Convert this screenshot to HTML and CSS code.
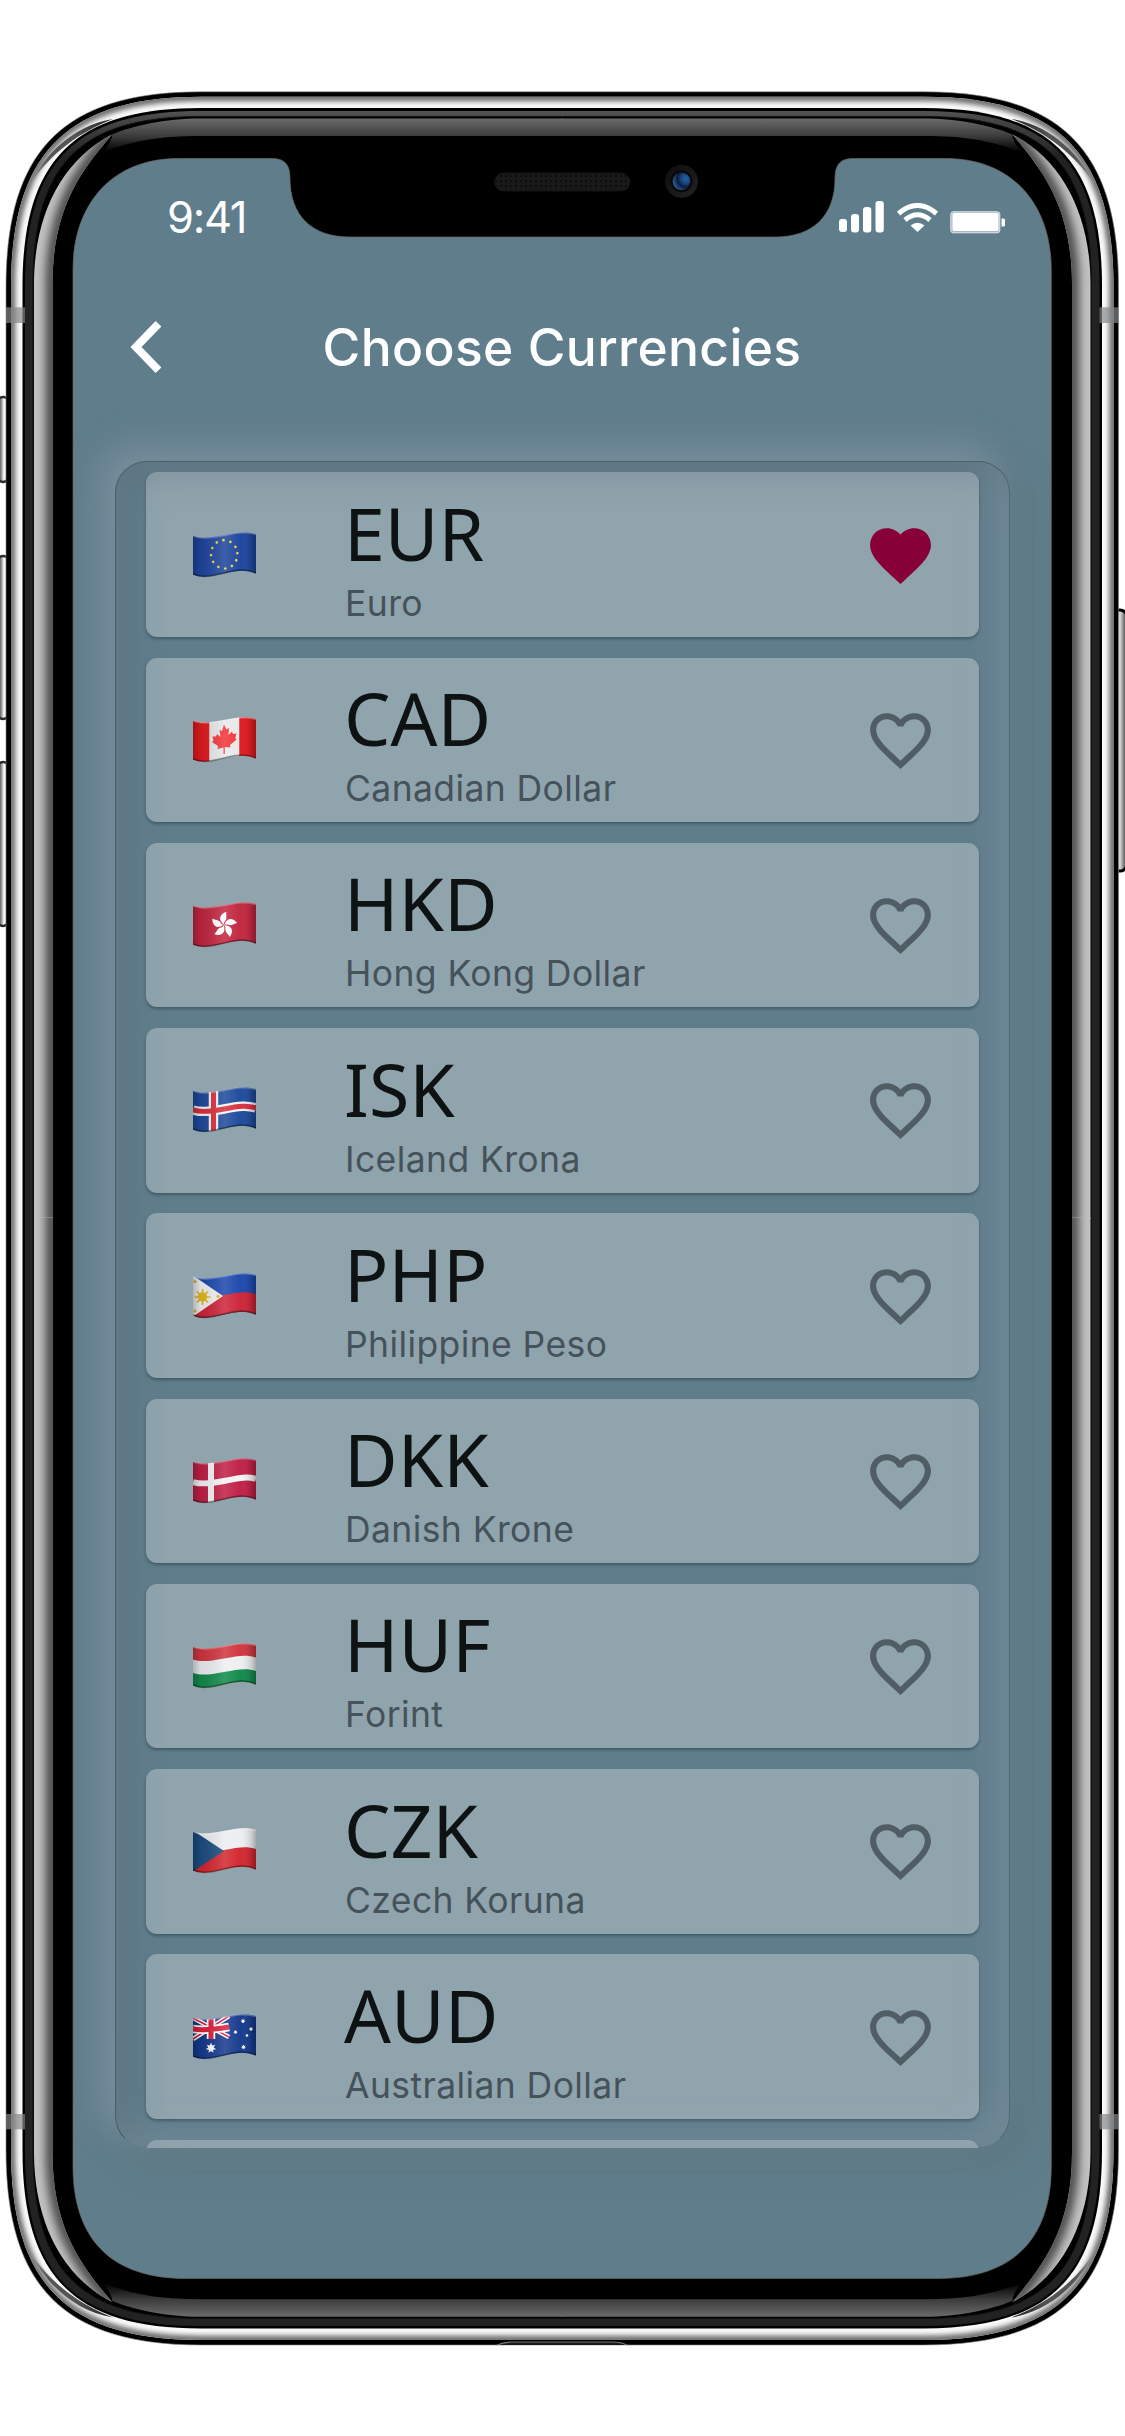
FILE: index.html
```html
<!DOCTYPE html>
<html lang="en">
<head>
<meta charset="utf-8">
<title>Choose Currencies</title>
<link rel="stylesheet" href="styles.css">
</head>
<body>
<div class="phone">
  <svg class="frame" viewBox="0 0 1125 2436" aria-hidden="true">
    <defs>
      <linearGradient id="btn" x1="0" x2="1" y1="0" y2="0"><stop offset="0" stop-color="#222"/><stop offset=".3" stop-color="#777"/><stop offset=".42" stop-color="#aaa"/><stop offset=".58" stop-color="#fff"/><stop offset=".75" stop-color="#ddd"/><stop offset="1" stop-color="#888"/></linearGradient>
      <linearGradient id="btnR" x1="0" x2="1" y1="0" y2="0"><stop offset="0" stop-color="#999"/><stop offset=".3" stop-color="#ddd"/><stop offset=".55" stop-color="#d4d4d4"/><stop offset=".8" stop-color="#777"/><stop offset="1" stop-color="#333"/></linearGradient>
      <linearGradient id="topEdge" gradientUnits="userSpaceOnUse" x1="0" x2="0" y1="108" y2="170"><stop offset="0" stop-color="#5a5a5a"/><stop offset=".15" stop-color="#484848"/><stop offset=".8" stop-color="#222"/></linearGradient>
      <linearGradient id="strip" gradientUnits="userSpaceOnUse" x1="0" x2="0" y1="118" y2="152"><stop offset="0" stop-color="#6c6c6c"/><stop offset=".53" stop-color="#3c3c3c"/><stop offset="1" stop-color="#000"/></linearGradient>
      <linearGradient id="streak" gradientUnits="userSpaceOnUse" x1="30" x2="115" y1="185" y2="115"><stop offset="0" stop-color="#999"/><stop offset=".3" stop-color="#555"/><stop offset=".6" stop-color="#555"/><stop offset="1" stop-color="#222"/></linearGradient>
      <radialGradient id="lens" cx=".75" cy=".35" r=".8"><stop offset="0" stop-color="#245f9f"/><stop offset=".35" stop-color="#1a4580"/><stop offset=".6" stop-color="#0c1c3c"/><stop offset="1" stop-color="#2d66a8"/></radialGradient>
      <linearGradient id="lensRing" x1="0" y1="0" x2="1" y2="1"><stop offset="0" stop-color="#0c0c0c"/><stop offset="1" stop-color="#242424"/></linearGradient>
      <pattern id="mesh" width="5" height="5" patternUnits="userSpaceOnUse"><rect width="5" height="5" fill="#191919"/><rect width="2" height="2" fill="#0b0b0b"/></pattern>
      <filter id="soft" x="-10%" y="-10%" width="120%" height="120%"><feGaussianBlur stdDeviation="2.8"/></filter>
      <filter id="soft2" x="-50%" y="-5%" width="200%" height="110%"><feGaussianBlur stdDeviation="5"/></filter>
      <path id="steel" d="M201,96.8H923.5C1057.5,96.8 1113.5,152.8 1113.5,286.8V2150C1113.5,2284 1057.5,2340 923.5,2340H201C67,2340 11,2284 11,2150V286.8C11,152.8 67,96.8 201,96.8Z"/>
      <clipPath id="steelClip"><use href="#steel"/></clipPath>
      <path id="glass" d="M34,1219V284C34,215 62,160 112,134.500C84,168 52.500,205 52.500,284V1219Z"/>
      <clipPath id="glassClip"><use href="#glass"/></clipPath>
      <g id="corner">
        <path d="M30,184C45,155 72,126 113,119C80,132 52,152 30,184Z" fill="url(#streak)"/>
        <use href="#glass" fill="#c2c2c2"/>
        <g clip-path="url(#glassClip)"><path d="M112,134.500C84,168 52.500,205 52.500,284V1330" fill="none" stroke="#484848" stroke-width="14" filter="url(#soft2)"/></g>
      </g>
      <path id="stripShape" d="M563,118.500H201C165,118.500 132,126 112,134.500C112,142 106,148 102,153C130,141 160,136 201,136H563Z"/>
    </defs>
    <g stroke="#2a2a2a" stroke-width="2.500" fill="url(#btn)">
      <rect x="-3" y="397" width="12" height="85" rx="6"/><rect x="-3" y="556" width="12" height="163" rx="6"/><rect x="-3" y="762" width="12" height="164" rx="6"/>
    </g>
    <rect x="1112" y="610" width="15" height="261" rx="7" stroke="#000" stroke-width="3" fill="url(#btnR)"/>
    <path d="M201,91.800H923.500C1060.500,91.800 1118.500,149.800 1118.500,286.800V2150C1118.500,2287 1060.500,2345 923.500,2345H201C64,2345 6,2287 6,2150V286.800C6,149.800 64,91.800 201,91.800Z" stroke="#888" stroke-width=".6"/>
    <use href="#steel" fill="#fafafa"/>
    <g clip-path="url(#steelClip)"><use href="#steel" fill="none" stroke="#707070" stroke-width="9" filter="url(#soft)"/></g>
    <path d="M200.500,108H924C1050,108 1102,160 1102,286V2150.500C1102,2276.500 1050,2328.500 924,2328.500H200.500C74.500,2328.500 22.500,2276.500 22.500,2150.500V286C22.500,160 74.500,108 200.500,108Z"/>
    <path d="M201,111H923.500C1049.500,111 1099.500,161 1099.500,287V2150C1099.500,2276 1049.500,2326 923.500,2326H201C75,2326 25,2276 25,2150V287C25,161 75,111 201,111Z" fill="url(#topEdge)"/>
    <path d="M201,116.500H923.500C1044.500,116.500 1091.500,163.500 1091.500,284.500V2150.500C1091.500,2271.500 1044.500,2318.500 923.500,2318.500H201C80,2318.500 33,2271.500 33,2150.500V284.500C33,163.500 80,116.500 201,116.500Z" fill="#000" stroke="#111" stroke-width="1"/>
    <use href="#corner"/>
    <use href="#corner" transform="translate(1124.500 0) scale(-1 1)"/>
    <use href="#corner" transform="translate(0 2436.500) scale(1 -1)"/>
    <use href="#corner" transform="translate(1124.500 2436.500) scale(-1 -1)"/>
    <g fill="url(#strip)">
      <use href="#stripShape"/>
      <use href="#stripShape" transform="translate(1124.500 0) scale(-1 1)"/>
      <use href="#stripShape" transform="translate(0 2435.300) scale(1 -1)"/>
      <use href="#stripShape" transform="translate(1124.500 2435.300) scale(-1 -1)"/>
    </g>
    <g fill="#868789" opacity=".69"><rect x="6" y="307.300" width="19" height="15.700"/><rect x="1099.500" y="307.300" width="19" height="15.700"/><rect x="6" y="2114" width="19" height="15.300"/><rect x="1099.500" y="2114" width="19" height="15.300"/></g>
    <path d="M178,158.500H272C284,158.500 290,164 290,178C290,216 312,237 350,237H775C813,237 835,216 835,178C835,164 841,158.500 853,158.500H946C1012,158.500 1051.300,204 1051.300,270V2166C1051.300,2240 1012,2278.500 938,2278.500H186C112,2278.500 73,2240 73,2166V270C73,204 112,158.500 178,158.500Z" fill="#607d8b" stroke="#6b6560" stroke-width=".7"/>
    <rect x="494.500" y="173" width="135.500" height="18" rx="9" fill="url(#mesh)" stroke="#141414"/>
    <circle cx="681.500" cy="181.300" r="16.500" fill="url(#lensRing)"/><circle cx="681.500" cy="181.300" r="11" fill="#080808"/><circle cx="681.500" cy="181.300" r="8.800" fill="url(#lens)"/>
    <path d="M497,2345C502,2342.500 506,2342 512,2342H612C618,2342 622,2342.500 627,2345" fill="#1a1a1a" stroke="#777" stroke-width="1.200"/>
  </svg>

  <svg class="defs" aria-hidden="true">
    <defs>
      <linearGradient id="sheen" x1="0" x2="1" y1="0" y2="0"><stop offset="0" stop-color="#000" stop-opacity=".25"/><stop offset=".12" stop-color="#000" stop-opacity=".08"/><stop offset=".5" stop-color="#fff" stop-opacity=".14"/><stop offset=".75" stop-color="#fff" stop-opacity=".02"/><stop offset=".93" stop-color="#000" stop-opacity=".14"/><stop offset="1" stop-color="#000" stop-opacity=".3"/></linearGradient>
      <path id="wave" d="M0,3.500C8,6.500 16,6 31,3S54,-1 63,2V41.500C54,37.500 46,38 31,41.500S8,46 0,42.500Z"/>
      <clipPath id="waveClip"><use href="#wave"/></clipPath>
      <g id="gloss"><use href="#wave" fill="url(#sheen)"/><path d="M0,42C8,45.500 16,45 31,41S54,37 63,41" fill="none" stroke="#000" stroke-opacity=".4" stroke-width="1.600"/><path d="M0,4C8,7 16,6.500 31,3.500S54,-.5 63,2.500" fill="none" stroke="#fff" stroke-opacity=".25" stroke-width="1.500"/></g>
      <path id="heart" d="M16.500 3c-1.740 0-3.410.810-4.500 2.090C10.910 3.810 9.240 3 7.500 3 4.420 3 2 5.420 2 8.500c0 3.780 3.400 6.860 8.550 11.540L12 21.350l1.450-1.320C18.600 15.360 22 12.280 22 8.500 22 5.420 19.580 3 16.500 3zm-4.400 15.550l-.1.100-.1-.1C7.140 14.240 4 11.390 4 8.500 4 6.500 5.500 5 7.500 5c1.540 0 3.040.990 3.570 2.360h1.870C13.460 5.990 14.960 5 16.500 5c2 0 3.500 1.500 3.500 3.500 0 2.890-3.140 5.740-7.900 10.050z"/>
      <path id="star" d="M0,-3.600L.8,-1.600 2.800,-2.200 1.800,-.4 3.500,.8 1.400,1.200 1.600,3.200 0,2 -1.600,3.200 -1.400,1.200 -3.500,.8 -1.800,-.4 -2.800,-2.200 -.8,-1.600Z"/>
      <path id="petal" d="M0,0C-2,-2.500 -5,-4.500 -3.500,-8.500C-2.500,-11 0,-12.500 2.500,-13C1.500,-10.500 3,-9 2.200,-6C1.500,-3.500 -.8,-3 0,0Z"/>
    </defs>
  </svg>

  <div class="screen">
    <div class="status">
      <span class="time">9:41</span>
      <div class="indicators">
        <svg class="signal" viewBox="0 0 45 32"><g fill="#fff"><rect y="18" width="8" height="13" rx="3"/><rect x="12" y="13" width="8" height="18.500" rx="3"/><rect x="24" y="6" width="8.300" height="25.500" rx="3"/><rect x="36.500" width="8.300" height="31.500" rx="3"/></g></svg>
        <svg class="wifi" viewBox="0 0 41 29"><path d="M1.500,10.500Q20.500,-5.500 39.500,10.500M8,17Q20.500,6.500 33,17" fill="none" stroke="#fff" stroke-width="5"/><path d="M13.500,22.500Q20.500,17 27.500,22.500L20.500,29Z" fill="#fff"/></svg>
        <svg class="battery" viewBox="0 0 56 23"><rect x=".8" y=".8" width="49" height="21" rx="2.500" fill="#a9b9c1" stroke="#e4e9ec" stroke-width="1"/><rect x="2.500" y="2" width="46" height="18" rx="1.500" fill="#fff"/><path d="M51.500,7.500h2q1.500,0 1.500,1.500v5q0,1.500-1.500,1.500h-2z" fill="#fff"/></svg>
      </div>
    </div>
    <header class="bar">
      <svg class="back" viewBox="0 0 32 52"><path d="M28.500,2.800L6,26 28.500,49.200" fill="none" stroke="#fff" stroke-width="8"/></svg>
      <h1>Choose Currencies</h1>
    </header>
    <main class="panel">
      <ul class="list">
        <li class="card"><svg class="flag" viewBox="0 0 63 46"><g clip-path="url(#waveClip)"><rect width="63" height="46" fill="#1e459d"/><ellipse cx="31.200" cy="22.300" rx="13.200" ry="14.200" fill="none" stroke="#f0d040" stroke-width="2.600" stroke-linecap="round" stroke-dasharray=".1 7.080" transform="rotate(-5 31 22)"/></g><use href="#gloss"/></svg><div class="names"><strong>EUR</strong><span>Euro</span></div><svg class="heart on" viewBox="0 0 24 24"><path d="M12 21.350l-1.450-1.320C5.400 15.360 2 12.280 2 8.500 2 5.420 4.420 3 7.500 3c1.740 0 3.410.810 4.500 2.090C13.090 3.810 14.760 3 16.500 3 19.580 3 22 5.420 22 8.500c0 3.780-3.400 6.860-8.550 11.540L12 21.350z"/></svg></li>
        <li class="card"><svg class="flag" viewBox="0 0 63 46"><g clip-path="url(#waveClip)"><rect width="63" height="46" fill="#e6e8ea"/><path d="M0,0H16.300V46H0ZM46.300,0H63V46H46.300Z" fill="#e01a1f"/><path d="M31,7.500L33.500,12.500 36,11 35.500,18 39,14.500 40,17 43.500,16.500 42.300,21 43.500,22.500 37,28 37.500,30.500 31.800,30V37H30.500V30.500L24.500,32 25,29 19,25 20.500,23.500 19.500,19.500 23,19.500 24,17 27.500,20 26.500,13 29,14Z" fill="#f23538"/></g><use href="#gloss"/></svg><div class="names"><strong>CAD</strong><span>Canadian Dollar</span></div><svg class="heart" viewBox="0 0 24 24"><use href="#heart"/></svg></li>
        <li class="card"><svg class="flag" viewBox="0 0 63 46"><g clip-path="url(#waveClip)"><rect width="63" height="46" fill="#c22640"/><g fill="#fff" transform="translate(31 23)"><use href="#petal"/><use href="#petal" transform="rotate(72)"/><use href="#petal" transform="rotate(144)"/><use href="#petal" transform="rotate(216)"/><use href="#petal" transform="rotate(288)"/></g></g><use href="#gloss"/></svg><div class="names"><strong>HKD</strong><span>Hong Kong Dollar</span></div><svg class="heart" viewBox="0 0 24 24"><use href="#heart"/></svg></li>
        <li class="card"><svg class="flag" viewBox="0 0 63 46"><g clip-path="url(#waveClip)" fill="none"><rect width="63" height="46" fill="#1e4a9c"/><path d="M20.500,0V46M0,23C8,25.500 16,25 31,22S54,18 63,21" stroke="#f3f3f5" stroke-width="9.500"/><path d="M20.500,0V46M0,23C8,25.500 16,25 31,22S54,18 63,21" stroke="#d8303c" stroke-width="5"/></g><use href="#gloss"/></svg><div class="names"><strong>ISK</strong><span>Iceland Krona</span></div><svg class="heart" viewBox="0 0 24 24"><use href="#heart"/></svg></li>
        <li class="card"><svg class="flag" viewBox="0 0 63 46"><g clip-path="url(#waveClip)"><rect width="63" height="46" fill="#1c48ad"/><path d="M0,23C8,25.500 16,25 31,22S54,18 63,21V46H0Z" fill="#cd2439"/><path d="M0,2.500L30,23 0,43.500Z" fill="#f1f1f1"/><g fill="#e2b91f"><circle cx="9.500" cy="24" r="4.700"/><path d="M9.500,16V32M1.500,24H17.500M4,18.500L15,29.500M15,18.500L4,29.500" stroke="#e2b91f" stroke-width="1.700"/><circle cx="2" cy="8.500" r="1.500"/><circle cx="2" cy="38" r="1.500"/><circle cx="25" cy="23.300" r="1.600"/></g></g><use href="#gloss"/></svg><div class="names"><strong>PHP</strong><span>Philippine Peso</span></div><svg class="heart" viewBox="0 0 24 24"><use href="#heart"/></svg></li>
        <li class="card"><svg class="flag" viewBox="0 0 63 46"><g clip-path="url(#waveClip)" fill="none"><rect width="63" height="46" fill="#c01f45"/><path d="M18,0V46M0,24C8,26.500 16,26 31,23S54,18 63,21" stroke="#f3f3f5" stroke-width="6"/></g><use href="#gloss"/></svg><div class="names"><strong>DKK</strong><span>Danish Krone</span></div><svg class="heart" viewBox="0 0 24 24"><use href="#heart"/></svg></li>
        <li class="card"><svg class="flag" viewBox="0 0 63 46"><g clip-path="url(#waveClip)"><rect width="63" height="46" fill="#cf3540"/><path d="M0,16.500C8,19 16,18.500 31,15.500S54,11.500 63,14.500V46H0Z" fill="#edeef0"/><path d="M0,30C8,32.500 16,32 31,29S54,25 63,28V46H0Z" fill="#128a4c"/></g><use href="#gloss"/></svg><div class="names"><strong>HUF</strong><span>Forint</span></div><svg class="heart" viewBox="0 0 24 24"><use href="#heart"/></svg></li>
        <li class="card"><svg class="flag" viewBox="0 0 63 46"><g clip-path="url(#waveClip)"><rect width="63" height="46" fill="#edeef0"/><path d="M0,23C8,25.500 16,25 31,22S54,18 63,21V46H0Z" fill="#d3272f"/><path d="M0,2.500L31,23 0,43.500Z" fill="#1c4d80"/></g><use href="#gloss"/></svg><div class="names"><strong>CZK</strong><span>Czech Koruna</span></div><svg class="heart" viewBox="0 0 24 24"><use href="#heart"/></svg></li>
        <li class="card"><svg class="flag" viewBox="0 0 63 46"><g clip-path="url(#waveClip)"><rect width="63" height="46" fill="#163a8e"/><g fill="none"><path d="M0,4L36,23M36,2L0,25" stroke="#fff" stroke-width="4.500"/><path d="M0,4L36,23M36,2L0,25" stroke="#de1f3b" stroke-width="1.600"/><path d="M18,0V25M0,15C12,17 24,15 36,13" stroke="#fff" stroke-width="8.500"/><path d="M18,0V25M0,15C12,17 24,15 36,13" stroke="#de1f3b" stroke-width="5"/></g><g fill="#fff"><use href="#star" transform="translate(18 34) scale(1.500)"/><use href="#star" transform="translate(42.500 18) scale(.6)"/><use href="#star" transform="translate(50 7) scale(.7)"/><use href="#star" transform="translate(58 15) scale(.65)"/><circle cx="54" cy="21.500" r="1.300"/><use href="#star" transform="translate(50.500 33) scale(.7)"/></g></g><use href="#gloss"/></svg><div class="names"><strong>AUD</strong><span>Australian Dollar</span></div><svg class="heart" viewBox="0 0 24 24"><use href="#heart"/></svg></li>
        <li class="card"></li>
      </ul>
    </main>
  </div>
</div>
</body>
</html>
```
FILE: styles.css
```css
* { box-sizing: border-box; }
body { margin: 0; background: #fff; font-family: Inter, "Liberation Sans", sans-serif; }
.phone { display: grid; width: 1125px; height: 2436px; overflow: hidden; }
.frame, .screen { grid-area: 1 / 1; }
.frame { display: block; width: 1125px; height: 2436px; }
.defs { position: absolute; width: 0; height: 0; }
.screen {
  width: 978px; height: 2120px; margin: 158px 0 0 73px;
  display: flex; flex-direction: column; overflow: hidden;
  border-radius: 110px; z-index: 1;
}
.status {
  height: 118px; padding: 31px 45px 0 94px;
  display: flex; justify-content: space-between; align-items: flex-start; color: #fff;
}
.time { font-size: 43.5px; line-height: 56px; letter-spacing: -1.3px; }
.indicators { display: flex; align-items: flex-start; padding-top: 12px; }
.signal { width: 45px; height: 32px; }
.wifi { width: 41px; height: 29px; margin: 2px 0 0 13px; }
.battery { width: 56px; height: 23px; margin: 10px 0 0 12px; }
.bar { height: 142px; display: flex; align-items: center; padding: 0 56px 0 57px; }
.back { width: 32px; height: 52px; flex: none; }
.bar h1 {
  flex: 1; margin: 0 33px 0 0; text-align: center; color: #fff;
  font-size: 51.5px; line-height: 62px; font-weight: 500; letter-spacing: .35px;
}
.panel {
  position: relative; width: 895px; height: 1687px; margin: 43px 0 0 42px; flex: none;
  border-radius: 32px; background: #607d8b;
  box-shadow: -14px -14px 34px rgba(160, 170, 185, .42), 14px 14px 34px rgba(85, 110, 110, .34);
}
/* Sunken edge drawn above the scrolling cards */
.panel::after {
  content: ""; position: absolute; inset: 0; border-radius: 32px;
  border: 1px solid rgba(30, 50, 60, .4); border-bottom-color: transparent; border-right-color: rgba(30, 50, 60, .25);
  box-shadow: inset 12px 12px 36px rgba(85, 98, 106, .28), inset -14px -14px 34px rgba(165, 180, 195, .28);
}
.list {
  list-style: none; margin: 0; height: 100%; padding: 11.300px 31px 0; overflow: hidden;
  border-radius: 32px; display: flex; flex-direction: column; gap: 20.750px;
}
.card {
  flex: 0 0 164.500px; padding: 0 46px 0 47px; display: flex; align-items: center;
  border-radius: 11px; background: #90a4ae;
  box-shadow: 0 2px 3px rgba(20, 40, 50, .4);
}
.flag { width: 63px; height: 46px; flex: none; }
.names { flex: 1; padding: 14.500px 0 0 88px; height: 100%; display: flex; flex-direction: column; }
.names strong {
  font: 400 73.500px/92px "Noto Sans", sans-serif; color: #0f1213;
}
.names span { font-size: 35.500px; line-height: 44px; margin: 3px 0 0 1px; letter-spacing: .4px; color: #465259; }
.heart { width: 73px; height: 73px; flex: none; margin: 1px -4px 0 0; fill: #505d64; }
.heart.on { fill: #880038; }
```
